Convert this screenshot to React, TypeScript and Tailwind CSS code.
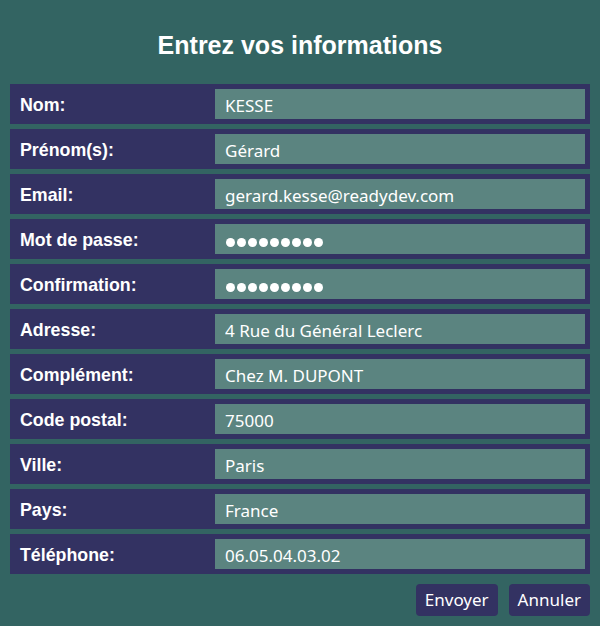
import React from "react";

const fields: { label: string; value: string; secret?: boolean }[] = [
  { label: "Nom:", value: "KESSE" },
  { label: "Prénom(s):", value: "Gérard" },
  { label: "Email:", value: "gerard.kesse@readydev.com" },
  { label: "Mot de passe:", value: "123456789", secret: true },
  { label: "Confirmation:", value: "123456789", secret: true },
  { label: "Adresse:", value: "4 Rue du Général Leclerc" },
  { label: "Complément:", value: "Chez M. DUPONT" },
  { label: "Code postal:", value: "75000" },
  { label: "Ville:", value: "Paris" },
  { label: "Pays:", value: "France" },
  { label: "Téléphone:", value: "06.05.04.03.02" },
];

export default function App() {
  return (
    <div className="w-[600px] h-[626px] bg-[#336462] px-[10px] font-['Liberation_Sans',Arial,sans-serif]">
      <h1 className="h-[84px] pt-[31px] text-center text-[25px] leading-[28px] font-bold text-white">
        Entrez vos informations
      </h1>

      <div className="flex flex-col gap-[5px]">
        {fields.map((f) => (
          <div key={f.label} className="flex h-10 items-center bg-[#333262] pl-[10px] pr-[5px]">
            <label className="w-[195px] pt-[2px] text-[17.8px] font-bold text-white">{f.label}</label>
            {f.secret ? (
              <div className="flex h-[30px] w-[370px] items-center gap-[2px] bg-[#5b8480] pl-[11px] pt-[6px]">
                {Array.from({ length: 9 }).map((_, i) => (
                  <span key={i} className="h-[9px] w-[9px] rounded-full bg-white" />
                ))}
              </div>
            ) : (
              <input
                type="text"
                defaultValue={f.value}
                readOnly
                className="h-[30px] w-[370px] bg-[#5b8480] px-[10px] pt-[2px] text-[17px] text-white outline-none font-['Noto_Sans',sans-serif]"
              />
            )}
          </div>
        ))}
      </div>

      <div className="mt-[10px] flex justify-end gap-[11px]">
        <button className="h-8 rounded-[4px] bg-[#333262] px-[9px] text-[17px] text-white font-['Noto_Sans',sans-serif]">
          Envoyer
        </button>
        <button className="h-8 rounded-[4px] bg-[#333262] px-[9px] text-[17px] text-white font-['Noto_Sans',sans-serif]">
          Annuler
        </button>
      </div>
    </div>
  );
}
